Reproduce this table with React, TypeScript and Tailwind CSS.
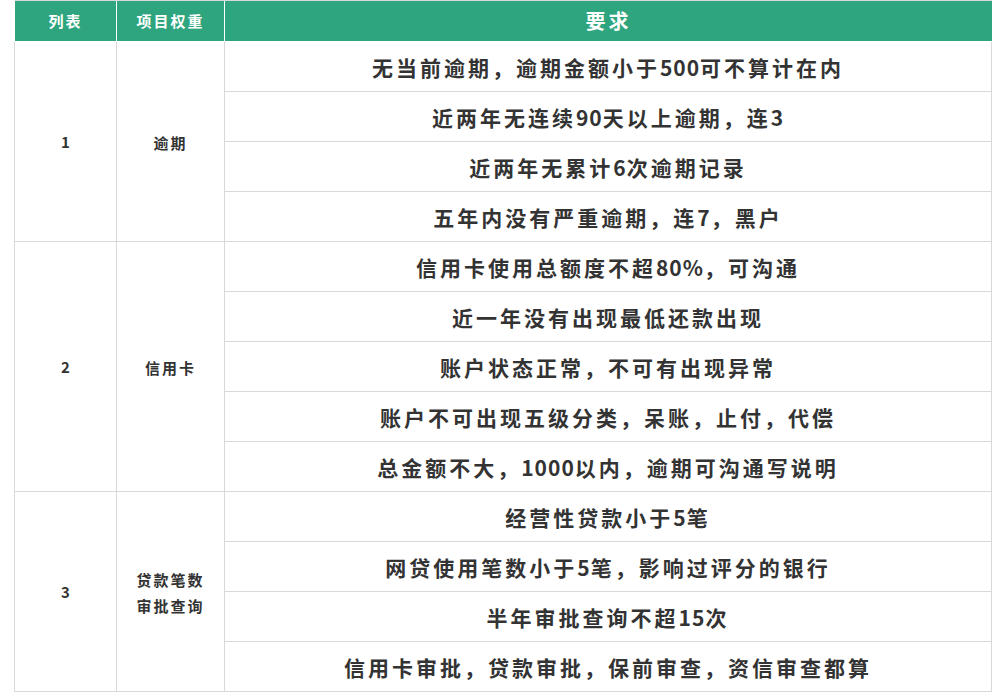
const groups = [
  {
    no: "1",
    item: ["逾期"],
    rows: [
      "无当前逾期，逾期金额小于500可不算计在内",
      "近两年无连续90天以上逾期，连3",
      "近两年无累计6次逾期记录",
      "五年内没有严重逾期，连7，黑户",
    ],
  },
  {
    no: "2",
    item: ["信用卡"],
    rows: [
      "信用卡使用总额度不超80%，可沟通",
      "近一年没有出现最低还款出现",
      "账户状态正常，不可有出现异常",
      "账户不可出现五级分类，呆账，止付，代偿",
      "总金额不大，1000以内，逾期可沟通写说明",
    ],
  },
  {
    no: "3",
    item: ["贷款笔数", "审批查询"],
    rows: [
      "经营性贷款小于5笔",
      "网贷使用笔数小于5笔，影响过评分的银行",
      "半年审批查询不超15次",
      "信用卡审批，贷款审批，保前审查，资信审查都算",
    ],
  },
];

// digits in the screenshot sit tighter than the CJK glyphs
function Req({ text }: { text: string }) {
  const parts = text.split(/(\d+%?)/);
  return (
    <span>
      {parts.map((p, i) =>
        /^\d/.test(p) ? (
          <span key={i} className="tracking-[1px]">
            {p}
          </span>
        ) : (
          <span key={i}>{p}</span>
        )
      )}
    </span>
  );
}

export default function App() {
  return (
    <div
      className="min-h-screen bg-white pl-[14px]"
      style={{ fontFamily: '"Noto Sans CJK SC", "Noto Sans", sans-serif' }}
    >
      <div className="w-[978px]">
        {/* header */}
        <div className="flex h-[42px] border-t border-b border-l border-[#d9d9d9] border-l-white border-b-white bg-[#2ea57e] text-white font-bold">
          <div className="w-[102px] flex items-center justify-center border-r border-white text-[15px] tracking-[2px]">
            列表
          </div>
          <div className="w-[108px] flex items-center justify-center border-r border-white text-[15px] tracking-[2px]">
            项目权重
          </div>
          <div className="flex-1 flex items-center justify-center text-[20px] tracking-[3px]">
            要求
          </div>
        </div>

        {groups.map((g) => (
          <div
            key={g.no}
            className="flex border-l border-r border-b border-[#d9d9d9] text-[#333333] font-bold"
          >
            <div className="w-[102px] shrink-0 flex items-center justify-center border-r border-[#d9d9d9] text-[15px] pt-[2px]">
              {g.no}
            </div>
            <div className="w-[108px] shrink-0 flex flex-col items-center justify-center border-r border-[#d9d9d9] text-[15px] leading-[26px] tracking-[2px] pt-[2px]">
              {g.item.map((t) => (
                <div key={t}>{t}</div>
              ))}
            </div>
            <div className="flex-1 flex flex-col">
              {g.rows.map((r) => (
                <div
                  key={r}
                  className="h-[50px] last:h-[49px] flex items-center justify-center border-b last:border-b-0 border-[#d9d9d9] text-[21px] tracking-[3px] pt-[2px]"
                >
                  <Req text={r} />
                </div>
              ))}
            </div>
          </div>
        ))}
      </div>
    </div>
  );
}
